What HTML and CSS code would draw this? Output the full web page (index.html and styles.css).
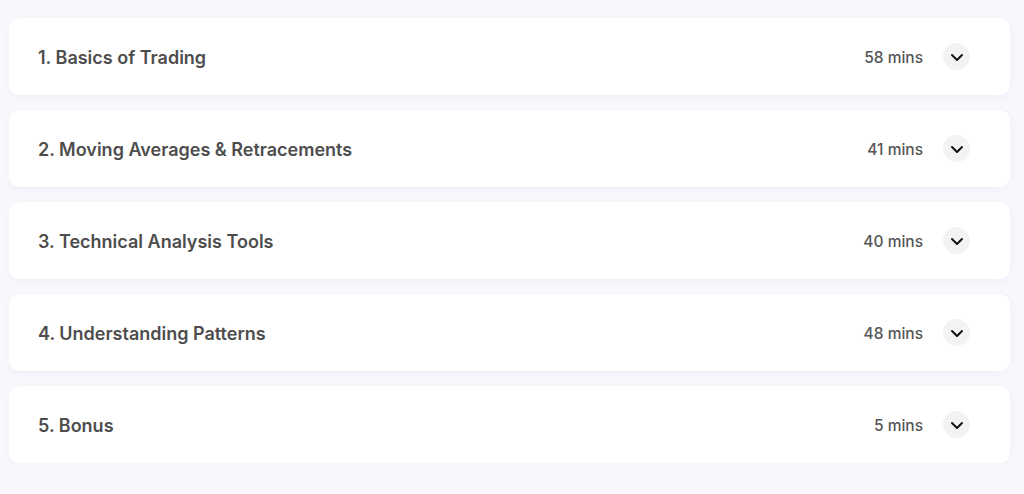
FILE: index.html
```html
<!DOCTYPE html>
<html lang="en">
<head>
    <meta charset="UTF-8">
    <meta name="viewport" content="width=device-width, initial-scale=1.0">
    <title>Course Curriculum</title>
    <link rel="stylesheet" href="styles.css">
</head>
<body>
    <div class="curriculum">
        <div class="module">
            <h3>1. Basics of Trading</h3>
            <div class="meta">
                <span class="duration">58 mins</span>
                <button class="toggle" aria-label="Expand">
                    <svg viewBox="0 0 16 16" width="16" height="16"><path d="M3 6 L8 11 L13 6" fill="none" stroke="#111" stroke-width="2" stroke-linecap="round" stroke-linejoin="round"/></svg>
                </button>
            </div>
        </div>
        <div class="module">
            <h3>2. Moving Averages &amp; Retracements</h3>
            <div class="meta">
                <span class="duration">41 mins</span>
                <button class="toggle" aria-label="Expand">
                    <svg viewBox="0 0 16 16" width="16" height="16"><path d="M3 6 L8 11 L13 6" fill="none" stroke="#111" stroke-width="2" stroke-linecap="round" stroke-linejoin="round"/></svg>
                </button>
            </div>
        </div>
        <div class="module">
            <h3>3. Technical Analysis Tools</h3>
            <div class="meta">
                <span class="duration">40 mins</span>
                <button class="toggle" aria-label="Expand">
                    <svg viewBox="0 0 16 16" width="16" height="16"><path d="M3 6 L8 11 L13 6" fill="none" stroke="#111" stroke-width="2" stroke-linecap="round" stroke-linejoin="round"/></svg>
                </button>
            </div>
        </div>
        <div class="module">
            <h3>4. Understanding Patterns</h3>
            <div class="meta">
                <span class="duration">48 mins</span>
                <button class="toggle" aria-label="Expand">
                    <svg viewBox="0 0 16 16" width="16" height="16"><path d="M3 6 L8 11 L13 6" fill="none" stroke="#111" stroke-width="2" stroke-linecap="round" stroke-linejoin="round"/></svg>
                </button>
            </div>
        </div>
        <div class="module">
            <h3>5. Bonus</h3>
            <div class="meta">
                <span class="duration">5 mins</span>
                <button class="toggle" aria-label="Expand">
                    <svg viewBox="0 0 16 16" width="16" height="16"><path d="M3 6 L8 11 L13 6" fill="none" stroke="#111" stroke-width="2" stroke-linecap="round" stroke-linejoin="round"/></svg>
                </button>
            </div>
        </div>
    </div>
</body>
</html>
```

FILE: styles.css
```css
body {
    font-family: Inter, "Open Sans", sans-serif;
    margin: 0;
    padding: 0;
    background-color: #f7f7fc;
}
.curriculum {
    display: flex;
    flex-direction: column;
    gap: 15px;
    padding: 18px 14px 0 9px;
}
.module {
    display: flex;
    align-items: center;
    justify-content: space-between;
    height: 77px;
    padding: 1px 40px 0 29px;
    background-color: #fff;
    border-radius: 10px;
    box-shadow: 0 2px 6px rgba(120, 120, 200, 0.06);
    box-sizing: border-box;
}
.module h3 {
    margin: 0;
    font-size: 18px;
    font-weight: 600;
    color: #4d4d4d;
}
.meta {
    display: flex;
    align-items: center;
    gap: 20px;
}
.duration {
    font-size: 15.5px;
    font-weight: 500;
    color: #555;
}
.toggle {
    display: flex;
    align-items: center;
    justify-content: center;
    width: 27px;
    height: 27px;
    margin-top: -1px;
    padding: 0;
    border: none;
    border-radius: 50%;
    background-color: #f3f3f5;
    cursor: pointer;
}
```
